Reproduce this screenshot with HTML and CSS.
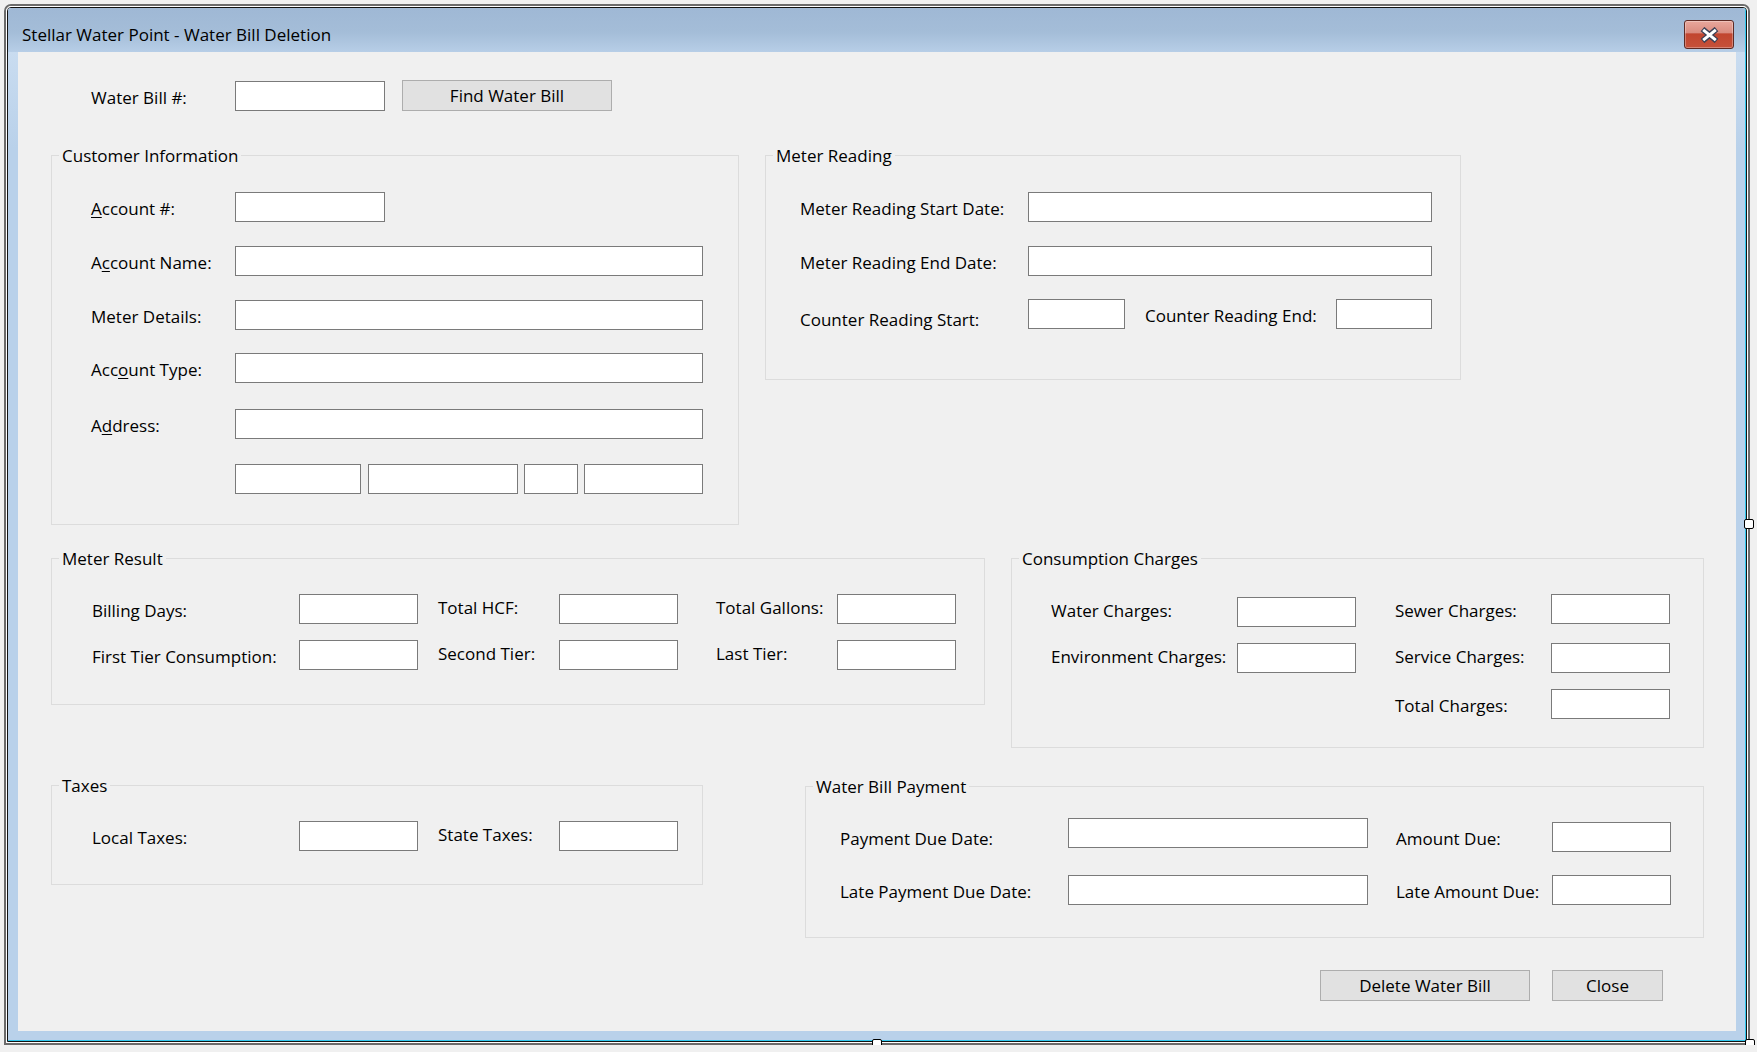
FILE: index.html
```html
<!DOCTYPE html>
<html>
<head>
<meta charset="utf-8">
<title>Stellar Water Point - Water Bill Deletion</title>
<link rel="stylesheet" href="styles.css">
</head>
<body>
<div class="window">
  <div class="w1"><div class="w2"><div class="w3">
    <div class="titlebar">
      <span class="title">Stellar Water Point - Water Bill Deletion</span>
      <button class="close" type="button" aria-label="Close">
        <svg width="19" height="16" viewBox="0 0 19 16">
          <path d="M2.5 2 L16.5 14 M16.5 2 L2.5 14" stroke="#3b4055" stroke-width="5.6" fill="none"/>
          <path d="M3.2 2.8 L15.8 13.2 M15.8 2.8 L3.2 13.2" stroke="#ffffff" stroke-width="3" fill="none"/>
        </svg>
      </button>
    </div>
    <div class="client">
      <div class="top-row">
        <span class="lbl c144 top-lbl">Water Bill #:</span>
        <input class="tb w150 mt1" type="text">
        <button class="btn find" type="button">Find Water Bill</button>
      </div>

      <div class="band band-b">
        <div class="group g-cust">
          <span class="gtitle">Customer Information</span>
          <div class="rows p39">
            <div class="row mt25"><span class="lbl c144"><u>A</u>ccount #:</span><input class="tb w150" type="text"></div>
            <div class="row mt24"><span class="lbl c144">A<u>c</u>count Name:</span><input class="tb w468" type="text"></div>
            <div class="row mt24"><span class="lbl c144">Meter Details:</span><input class="tb w468" type="text"></div>
            <div class="row mt23"><span class="lbl c144">Acc<u>o</u>unt Type:</span><input class="tb w468" type="text"></div>
            <div class="row mt26"><span class="lbl c144">A<u>d</u>dress:</span><input class="tb w468" type="text"></div>
            <div class="row mt25"><span class="c144"></span><input class="tb w126" type="text"><input class="tb w150 ml7" type="text"><input class="tb w54 ml6" type="text"><input class="tb w119 ml6" type="text"></div>
          </div>
        </div>
        <div class="group g-read">
          <span class="gtitle">Meter Reading</span>
          <div class="rows p34">
            <div class="row mt25"><span class="lbl c228">Meter Reading Start Date:</span><input class="tb w404" type="text"></div>
            <div class="row mt24"><span class="lbl c228">Meter Reading End Date:</span><input class="tb w404" type="text"></div>
            <div class="row mt23"><span class="lbl c228 low">Counter Reading Start:</span><input class="tb w97" type="text"><span class="lbl c191 ml20">Counter Reading End:</span><input class="tb w96" type="text"></div>
          </div>
        </div>
      </div>

      <div class="band band-c">
        <div class="group g-res">
          <span class="gtitle">Meter Result</span>
          <div class="rows p40">
            <div class="row mt24"><span class="lbl c207">Billing Days:</span><input class="tb w119" type="text"><span class="lbl c121 ml20 hi">Total HCF:</span><input class="tb w119" type="text"><span class="lbl c121 ml38 hi">Total Gallons:</span><input class="tb w119" type="text"></div>
            <div class="row mt16"><span class="lbl c207">First Tier Consumption:</span><input class="tb w119" type="text"><span class="lbl c121 ml20 hi">Second Tier:</span><input class="tb w119" type="text"><span class="lbl c121 ml38 hi">Last Tier:</span><input class="tb w119" type="text"></div>
          </div>
        </div>
        <div class="group g-cons">
          <span class="gtitle">Consumption Charges</span>
          <div class="rows p39">
            <div class="row mt24"><span class="lbl c186">Water Charges:</span><input class="tb w119 mt3" type="text"><span class="lbl c156 ml39">Sewer Charges:</span><input class="tb w119" type="text"></div>
            <div class="row mt19"><span class="lbl c186 hi">Environment Charges:</span><input class="tb w119" type="text"><span class="lbl c156 ml39 hi">Service Charges:</span><input class="tb w119" type="text"></div>
            <div class="row mt16"><span class="sp344"></span><span class="lbl c156">Total Charges:</span><input class="tb w119" type="text"></div>
          </div>
        </div>
      </div>

      <div class="band band-d">
        <div class="group g-tax">
          <span class="gtitle">Taxes</span>
          <div class="rows p40">
            <div class="row mt24"><span class="lbl c207">Local Taxes:</span><input class="tb w119" type="text"><span class="lbl c121 ml20 hi">State Taxes:</span><input class="tb w119" type="text"></div>
          </div>
        </div>
        <div class="group g-pay">
          <span class="gtitle">Water Bill Payment</span>
          <div class="rows p34">
            <div class="row mt20"><span class="lbl c228 low">Payment Due Date:</span><input class="tb w300" type="text"><span class="lbl c156 ml28 low">Amount Due:</span><input class="tb w119 mt4" type="text"></div>
            <div class="row mt27"><span class="lbl c228">Late Payment Due Date:</span><input class="tb w300" type="text"><span class="lbl c156 ml28">Late Amount Due:</span><input class="tb w119" type="text"></div>
          </div>
        </div>
      </div>

      <div class="band band-e">
        <button class="btn del" type="button">Delete Water Bill</button>
        <button class="btn cls" type="button">Close</button>
      </div>
    </div>
  </div></div></div>
  <span class="handle h-right"></span>
  <span class="handle h-bottom"></span>
  <span class="handle h-corner"></span>
</div>
</body>
</html>
```

FILE: styles.css
```css
html, body {
  margin: 0;
  padding: 0;
}
body {
  background: #f0f0f0;
  font-family: "Open Sans", "Noto Sans", sans-serif;
  font-size: 17px;
  color: #000;
  overflow: hidden;
}

/* ---------- window frame ---------- */
.window {
  position: relative;
  box-sizing: border-box;
  width: 1746px;
  height: 1041px;
  margin: 4px 0 0 4px;
  border: 2px solid #6b6b6b;
  border-radius: 7px 7px 0 0;
}
.w1 {
  box-sizing: border-box;
  height: 100%;
  border: 1px solid #ffffff;
  border-radius: 5px 5px 0 0;
}
.w2 {
  box-sizing: border-box;
  height: 100%;
  border: 1px solid #111111;
  border-radius: 4px 4px 0 0;
}
.w3 {
  box-sizing: border-box;
  height: 100%;
  border-right: 1px solid #2fc6ec;
  border-bottom: 1px solid #2fc6ec;
  border-radius: 3px 3px 0 0;
  background: linear-gradient(#c9dcf0 44px, #b9d1ea 140px);
  display: flex;
  flex-direction: column;
}
.titlebar {
  flex: none;
  height: 44px;
  display: flex;
  justify-content: space-between;
  align-items: flex-start;
  padding: 0 11px 0 14px;
  background: linear-gradient(#9fb8d5 0%, #a4bdd8 55%, #b7cee7 100%);
  border-radius: 3px 3px 0 0;
}
.title {
  margin-top: 16px;
  line-height: 22px;
  white-space: nowrap;
}
.close {
  margin-top: 12px;
  box-sizing: border-box;
  width: 50px;
  height: 29px;
  padding: 0;
  border: 1px solid #5e2a24;
  border-radius: 3px;
  background: linear-gradient(#e8a79c 0%, #d98a7e 45%, #c1452f 47%, #c6513a 100%);
  box-shadow: inset 0 0 0 1px rgba(255, 255, 255, 0.3);
  display: flex;
  align-items: center;
  justify-content: center;
}
.close svg {
  display: block;
}

/* ---------- client area ---------- */
.client {
  flex: 1;
  margin: 0 9px 9px 10px;
  background: #f0f0f0;
  display: flex;
  flex-direction: column;
}
.top-row {
  display: flex;
  align-items: flex-start;
  height: 31px;
  margin-top: 28px;
  padding-left: 73px;
}
.top-lbl { padding-top: 1px; }
.band {
  display: flex;
  align-items: flex-start;
}
.band-b { margin-top: 44px; }
.band-c { margin-top: 33px; }
.band-d { margin-top: 37px; }
.band-e { margin-top: 32px; padding-left: 1302px; }

/* ---------- group boxes ---------- */
.group {
  flex: none;
  box-sizing: border-box;
  border: 1px solid #dcdcdc;
}
.gtitle {
  display: block;
  width: max-content;
  margin: -11px 0 0 7px;
  padding: 0 3px;
  line-height: 22px;
  background: #f0f0f0;
  white-space: nowrap;
}
.g-cust { width: 688px; height: 370px; margin-left: 33px; }
.g-read { width: 696px; height: 225px; margin-left: 26px; }
.g-res  { width: 934px; height: 147px; margin-left: 33px; }
.g-cons { width: 693px; height: 190px; margin-left: 26px; }
.g-tax  { width: 652px; height: 100px; margin-left: 33px; }
.g-pay  { width: 899px; height: 152px; margin-left: 102px; margin-top: 1px; }

.p34 { padding-left: 34px; }
.p39 { padding-left: 39px; }
.p40 { padding-left: 40px; }

.row {
  display: flex;
  align-items: flex-start;
  height: 30px;
}

/* ---------- controls ---------- */
.lbl {
  flex: none;
  line-height: 34px;
  white-space: nowrap;
}
.lbl u {
  text-decoration-thickness: 1px;
  text-underline-offset: 2px;
}
.low { padding-top: 4px; }
.hi { margin-top: -3px; }

.tb {
  flex: none;
  display: block;
  box-sizing: border-box;
  height: 30px;
  margin: 0;
  padding: 0 4px;
  border: 1px solid #7a7a7a;
  border-radius: 0;
  background: #ffffff;
  font: inherit;
  outline: none;
}

.btn {
  flex: none;
  box-sizing: border-box;
  height: 31px;
  padding: 0;
  border: 1px solid #adadad;
  border-radius: 0;
  background: #e1e1e1;
  color: #000;
  font: inherit;
  line-height: 29px;
}
.find { width: 210px; margin-left: 17px; }
.del  { width: 210px; }
.cls  { width: 111px; margin-left: 22px; }

/* widths */
.c121 { width: 121px; }
.c144 { width: 144px; flex: none; }
.c156 { width: 156px; }
.c186 { width: 186px; }
.c191 { width: 191px; }
.c207 { width: 207px; }
.c228 { width: 228px; }
.sp344 { width: 344px; flex: none; }

.w54  { width: 54px; }
.w96  { width: 96px; }
.w97  { width: 97px; }
.w119 { width: 119px; }
.w126 { width: 126px; }
.w150 { width: 150px; }
.w300 { width: 300px; }
.w404 { width: 404px; }
.w468 { width: 468px; }

/* margins */
.mt1  { margin-top: 1px; }
.mt3  { margin-top: 3px; }
.mt4  { margin-top: 4px; }
.mt16 { margin-top: 16px; }
.mt19 { margin-top: 19px; }
.mt20 { margin-top: 20px; }
.mt23 { margin-top: 23px; }
.mt24 { margin-top: 24px; }
.mt25 { margin-top: 25px; }
.mt26 { margin-top: 26px; }
.mt27 { margin-top: 27px; }
.ml6  { margin-left: 6px; }
.ml7  { margin-left: 7px; }
.ml20 { margin-left: 20px; }
.ml28 { margin-left: 28px; }
.ml38 { margin-left: 38px; }
.ml39 { margin-left: 39px; }

/* ---------- designer selection handles ---------- */
.handle {
  position: absolute;
  box-sizing: border-box;
  width: 10px;
  height: 10px;
  border: 1px solid #000;
  border-radius: 2px;
  background: #fff;
}
.h-right  { left: 1738px; top: 513px; }
.h-bottom { left: 866px; top: 1033px; }
.h-corner { left: 1739px; top: 1033px; }
```
